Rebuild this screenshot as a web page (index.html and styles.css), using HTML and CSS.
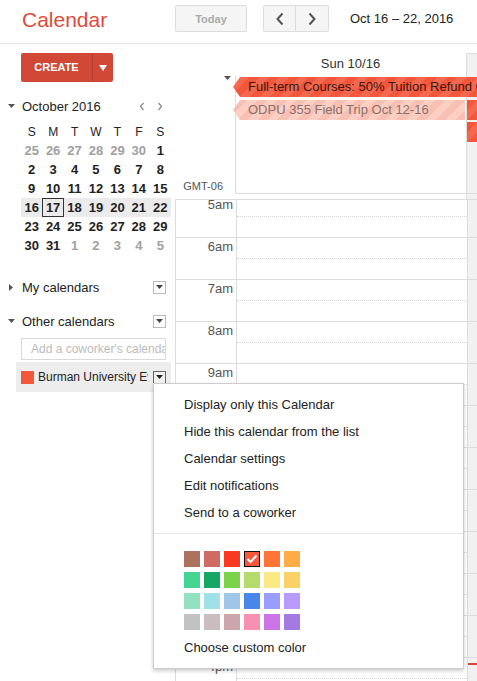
FILE: index.html
```html
<!DOCTYPE html>
<html lang="en">
<head>
    <meta charset="UTF-8">
    <title>Calendar</title>
    <link rel="stylesheet" href="styles.css">
</head>
<body>
    <header class="topbar">
        <div class="brand">Calendar</div>
        <button class="btn btn-today">Today</button>
        <div class="nav-group">
            <button class="btn btn-nav">
                <svg width="10" height="14" viewBox="0 0 10 14"><path d="M7.5 1.5 2.5 7l5 5.5" fill="none" stroke="#555" stroke-width="2"/></svg>
            </button>
            <button class="btn btn-nav">
                <svg width="10" height="14" viewBox="0 0 10 14"><path d="M2.5 1.5 7.5 7l-5 5.5" fill="none" stroke="#555" stroke-width="2"/></svg>
            </button>
        </div>
        <div class="date-range">Oct 16 &ndash; 22, 2016</div>
    </header>

    <div class="app">
        <aside class="sidebar">
            <div class="create">
                <span class="create-label">CREATE</span>
                <span class="create-arrow">
                    <svg width="8" height="6" viewBox="0 0 8 6"><path d="M0 0h8L4 6z" fill="#fff"/></svg>
                </span>
            </div>

            <div class="month-title">
                <svg class="caret" width="7" height="4" viewBox="0 0 7 4"><path d="M0 0h7L3.5 4z" fill="#555"/></svg>
                <span class="month-name">October 2016</span>
                <span class="month-nav">
                    <svg width="6" height="9" viewBox="0 0 6 9"><path d="M4.5 1 1.5 4.5l3 3.5" fill="none" stroke="#888" stroke-width="1.2"/></svg>
                    <svg width="6" height="9" viewBox="0 0 6 9"><path d="M1.5 1l3 3.5-3 3.5" fill="none" stroke="#888" stroke-width="1.2"/></svg>
                </span>
            </div>

            <table class="mini-cal">
                <thead>
                    <tr><th>S</th><th>M</th><th>T</th><th>W</th><th>T</th><th>F</th><th>S</th></tr>
                </thead>
                <tbody>
                    <tr><td class="off">25</td><td class="off">26</td><td class="off">27</td><td class="off">28</td><td class="off">29</td><td class="off">30</td><td>1</td></tr>
                    <tr><td>2</td><td>3</td><td>4</td><td>5</td><td>6</td><td>7</td><td>8</td></tr>
                    <tr><td>9</td><td>10</td><td>11</td><td>12</td><td>13</td><td>14</td><td>15</td></tr>
                    <tr class="week-current"><td>16</td><td class="today">17</td><td>18</td><td>19</td><td>20</td><td>21</td><td>22</td></tr>
                    <tr><td>23</td><td>24</td><td>25</td><td>26</td><td>27</td><td>28</td><td>29</td></tr>
                    <tr><td>30</td><td>31</td><td class="off">1</td><td class="off">2</td><td class="off">3</td><td class="off">4</td><td class="off">5</td></tr>
                </tbody>
            </table>

            <div class="cal-section">
                <svg class="caret" width="4" height="7" viewBox="0 0 4 7"><path d="M0 0l4 3.5L0 7z" fill="#555"/></svg>
                <span class="section-name">My calendars</span>
                <span class="dd"><svg width="7" height="4" viewBox="0 0 7 4"><path d="M0 0h7L3.5 4z" fill="#444"/></svg></span>
            </div>

            <div class="cal-section other">
                <svg class="caret" width="7" height="4" viewBox="0 0 7 4"><path d="M0 0h7L3.5 4z" fill="#555"/></svg>
                <span class="section-name">Other calendars</span>
                <span class="dd"><svg width="7" height="4" viewBox="0 0 7 4"><path d="M0 0h7L3.5 4z" fill="#444"/></svg></span>
            </div>

            <input class="coworker" type="text" placeholder="Add a coworker's calendar">

            <div class="cal-item">
                <span class="cal-swatch"></span>
                <span class="cal-name">Burman University Events</span>
                <span class="dd dd-active"><svg width="7" height="4" viewBox="0 0 7 4"><path d="M0 0h7L3.5 4z" fill="#222"/></svg></span>
            </div>
        </aside>

        <main class="week">
            <div class="dayhead">
                <div class="dayhead-label">Sun 10/16</div>
                <div class="today-col dayhead-today"></div>
            </div>

            <div class="allday">
                <div class="allday-gutter">
                    <svg class="allday-caret" width="7" height="4" viewBox="0 0 7 4"><path d="M0 0h7L3.5 4z" fill="#555"/></svg>
                    <span class="tz">GMT-06</span>
                </div>
                <div class="allday-day"></div>
                <div class="today-col allday-today"></div>
                <div class="event event-main">Full-term Courses: 50% Tuition Refund Oct 14-20</div>
                <div class="event event-trip">ODPU 355 Field Trip Oct 12-16</div>
                <div class="event-block row2"></div>
                <div class="event-block row3"></div>
            </div>

            <div class="allday-gap">
                <div></div><div></div><div class="today-col"></div>
            </div>

            <div class="timegrid">
                <div class="hours">
                    <div class="hour"><div class="hour-label">5am</div><div class="hour-day"></div><div class="today-col"></div></div>
                    <div class="hour"><div class="hour-label">6am</div><div class="hour-day"></div><div class="today-col"></div></div>
                    <div class="hour"><div class="hour-label">7am</div><div class="hour-day"></div><div class="today-col"></div></div>
                    <div class="hour"><div class="hour-label">8am</div><div class="hour-day"></div><div class="today-col"></div></div>
                    <div class="hour"><div class="hour-label">9am</div><div class="hour-day"></div><div class="today-col"></div></div>
                    <div class="hour"><div class="hour-label">10am</div><div class="hour-day"></div><div class="today-col"></div></div>
                    <div class="hour"><div class="hour-label">11am</div><div class="hour-day"></div><div class="today-col"></div></div>
                    <div class="hour"><div class="hour-label">12pm</div><div class="hour-day"></div><div class="today-col"></div></div>
                    <div class="hour"><div class="hour-label">1pm</div><div class="hour-day"></div><div class="today-col"></div></div>
                    <div class="hour"><div class="hour-label">2pm</div><div class="hour-day"></div><div class="today-col"></div></div>
                    <div class="hour"><div class="hour-label">3pm</div><div class="hour-day"></div><div class="today-col"></div></div>
                    <div class="hour"><div class="hour-label">4pm</div><div class="hour-day"></div><div class="today-col now"><span class="now-line"></span></div></div>
                    <div class="hour"><div class="hour-label">5pm</div><div class="hour-day"></div><div class="today-col"></div></div>
                </div>
            </div>
        </main>
    </div>

    <!-- calendar options menu -->
    <div class="menu">
        <div class="menu-item">Display only this Calendar</div>
        <div class="menu-item">Hide this calendar from the list</div>
        <div class="menu-item">Calendar settings</div>
        <div class="menu-item">Edit notifications</div>
        <div class="menu-item">Send to a coworker</div>
        <div class="menu-sep"></div>
        <div class="swatches">
            <span class="sw" style="background:#ac725e"></span>
            <span class="sw" style="background:#d06b64"></span>
            <span class="sw" style="background:#f83a22"></span>
            <span class="sw sw-selected" style="background:#fa573c">
                <svg width="12" height="10" viewBox="0 0 12 10"><path d="M1.5 5 4.5 8l6-6.5" fill="none" stroke="#fff" stroke-width="2"/></svg>
            </span>
            <span class="sw" style="background:#ff7537"></span>
            <span class="sw" style="background:#ffad46"></span>
            <span class="sw" style="background:#42d692"></span>
            <span class="sw" style="background:#16a765"></span>
            <span class="sw" style="background:#7bd148"></span>
            <span class="sw" style="background:#b3dc6c"></span>
            <span class="sw" style="background:#fbe983"></span>
            <span class="sw" style="background:#fad165"></span>
            <span class="sw" style="background:#92e1c0"></span>
            <span class="sw" style="background:#9fe1e7"></span>
            <span class="sw" style="background:#9fc6e7"></span>
            <span class="sw" style="background:#4986e7"></span>
            <span class="sw" style="background:#9a9cff"></span>
            <span class="sw" style="background:#b99aff"></span>
            <span class="sw" style="background:#c2c2c2"></span>
            <span class="sw" style="background:#cabdbf"></span>
            <span class="sw" style="background:#cca6ac"></span>
            <span class="sw" style="background:#f691b2"></span>
            <span class="sw" style="background:#cd74e6"></span>
            <span class="sw" style="background:#a47ae2"></span>
        </div>
        <div class="menu-item">Choose custom color</div>
    </div>
</body>
</html>
```

FILE: styles.css
```css
body {
    margin: 0;
    width: 477px;
    height: 681px;
    overflow: hidden;
    position: relative;
    font-family: "Liberation Sans", Arial, sans-serif;
    font-size: 13px;
    color: #222;
    background: #fff;
}

/* top bar */
.topbar {
    display: flex;
    align-items: flex-start;
    height: 44px;
    padding: 5px 0 0 22px;
    box-sizing: border-box;
    border-bottom: 1px solid #e5e5e5;
}

.brand {
    width: 153px;
    font-size: 21px;
    line-height: 29px;
    color: #dd4b39;
}

.btn {
    height: 27px;
    margin: 0;
    padding: 0;
    background: #f5f5f5;
    border: 1px solid #dcdcdc;
    border-radius: 2px;
    font-family: inherit;
    display: flex;
    align-items: center;
    justify-content: center;
}

.btn-today {
    width: 72px;
    font-size: 11px;
    font-weight: bold;
    color: #aaa;
}

.nav-group {
    display: flex;
    margin-left: 16px;
}

.btn-nav {
    width: 33px;
}

.btn-nav:first-child {
    border-radius: 2px 0 0 2px;
}

.btn-nav:last-child {
    border-left: 0;
    border-radius: 0 2px 2px 0;
}

.date-range {
    margin-left: 21px;
    line-height: 27px;
    font-size: 13px;
    color: #222;
}

/* layout */
.app {
    display: flex;
}

.sidebar {
    width: 175px;
    flex-shrink: 0;
}

/* create button */
.create {
    display: flex;
    width: 92px;
    height: 29px;
    margin: 9px 0 0 21px;
    background: #d14836;
    border-radius: 2px;
    color: #fff;
}

.create-label {
    width: 71px;
    line-height: 29px;
    text-align: center;
    font-size: 11px;
    font-weight: bold;
    border-right: 1px solid rgba(0, 0, 0, 0.15);
}

.create-arrow {
    flex: 1;
    display: flex;
    align-items: center;
    justify-content: center;
}

/* mini calendar */
.month-title {
    display: flex;
    align-items: center;
    height: 18px;
    margin-top: 15px;
    padding-left: 8px;
}

.caret {
    flex-shrink: 0;
}

.month-name {
    margin-left: 7px;
    font-size: 13px;
}

.month-nav {
    display: flex;
    gap: 12px;
    margin-left: auto;
    margin-right: 12px;
}

.mini-cal {
    width: 150px;
    margin: 7px 0 0 21px;
    border-collapse: collapse;
    table-layout: fixed;
}

.mini-cal th,
.mini-cal td {
    height: 19px;
    padding: 0;
    text-align: center;
    font-size: 13px;
}

.mini-cal th {
    font-weight: normal;
    font-size: 12px;
}

.mini-cal td {
    font-weight: bold;
    color: #222;
}

.mini-cal td.off {
    color: #a0a0a0;
}

.week-current td {
    background: #ebebeb;
}

.mini-cal td.today {
    box-shadow: inset 0 0 0 1px #333;
}

/* calendar lists */
.cal-section {
    display: flex;
    align-items: center;
    height: 26px;
    margin-top: 19px;
    padding: 0 9px 0 9px;
}

.cal-section .section-name {
    margin-left: 9px;
    font-size: 13px;
}

.cal-section.other {
    margin-top: 8px;
    padding-left: 8px;
}

.cal-section.other .section-name {
    margin-left: 7px;
}

.dd {
    display: flex;
    align-items: center;
    justify-content: center;
    width: 13px;
    height: 13px;
    margin-left: auto;
    box-sizing: border-box;
    border: 1px solid #bbb;
    background: #fff;
}

.coworker {
    display: block;
    width: 145px;
    height: 22px;
    margin: 4px 0 0 21px;
    padding: 0 0 0 9px;
    box-sizing: border-box;
    border: 1px solid #d9d9d9;
    font-family: inherit;
    font-size: 12px;
}

.coworker::placeholder {
    color: #bbb;
}

.cal-item {
    display: flex;
    align-items: center;
    height: 30px;
    margin: 2px 4px 0 16px;
    padding: 0 5px;
    background: #ededed;
}

.cal-swatch {
    width: 13px;
    height: 13px;
    flex-shrink: 0;
    background: #f4583b;
}

.cal-name {
    width: 110px;
    margin-left: 4px;
    overflow: hidden;
    white-space: nowrap;
    font-size: 12px;
}

.dd-active {
    border-color: #666;
    background: #f1f1f1;
}

/* week view */
.week {
    width: 302px;
    flex-shrink: 0;
}

.dayhead,
.allday,
.allday-gap,
.hour {
    display: grid;
    grid-template-columns: 60px 231px 1fr;
}

.today-col {
    background: #f1f1f1;
    border-left: 1px solid #dcdcdc;
}

.dayhead {
    height: 32px;
}

.dayhead-label {
    grid-column: 2;
    padding-top: 12px;
    line-height: 15px;
    text-align: center;
    color: #333;
}

.dayhead-today {
    grid-column: 3;
    margin-top: 9px;
    border-top: 1px solid #dcdcdc;
}

.allday {
    height: 118px;
    grid-template-rows: 23px 22px 22px 1fr;
}

.allday-gutter {
    grid-column: 1;
    grid-row: 1 / -1;
    display: flex;
    flex-direction: column;
    justify-content: space-between;
    align-items: flex-end;
}

.allday-caret {
    margin-right: 4px;
}

.tz {
    padding-right: 12px;
    line-height: 15px;
    font-size: 11px;
    color: #555;
}

.allday-day {
    grid-column: 2;
    grid-row: 1 / -1;
    border-left: 1px solid #dcdcdc;
    border-bottom: 1px solid #dcdcdc;
}

.allday-today {
    grid-column: 3;
    grid-row: 1 / -1;
    border-bottom: 1px solid #dcdcdc;
}

.event {
    height: 20px;
    margin: 1px 0 0 -2px;
    padding-left: 15px;
    line-height: 20px;
    white-space: nowrap;
    overflow: hidden;
    clip-path: polygon(7px 0, 100% 0, 100% 100%, 7px 100%, 0 50%);
}

.event-main {
    grid-column: 2 / 4;
    grid-row: 1;
    color: #3d1710;
    background: repeating-linear-gradient(-45deg, #f2563b 0 7px, #f4684f 7px 14px);
}

.event-trip {
    grid-column: 2;
    grid-row: 2;
    margin-right: 1px;
    color: #8a716c;
    background: repeating-linear-gradient(-45deg, #f8c0b3 0 7px, #fbcfc4 7px 14px);
}

.event-block {
    grid-column: 3;
    height: 20px;
    margin: 1px 0 0 1px;
    background: repeating-linear-gradient(-45deg, #f2563b 0 7px, #f4684f 7px 14px);
}

.event-block.row2 {
    grid-row: 2;
}

.event-block.row3 {
    grid-row: 3;
}

.allday-gap {
    height: 5px;
}

.timegrid {
    height: 482px;
    overflow: hidden;
    border-top: 1px solid #dcdcdc;
    border-left: 1px solid #dcdcdc;
}

.hours {
    margin-top: -5px;
}

.hour {
    height: 42px;
    box-sizing: border-box;
    border-top: 1px solid #dcdcdc;
}

.hour-label {
    padding: 1px 3px 0 0;
    line-height: 15px;
    text-align: right;
    color: #555;
}

.hour-day {
    position: relative;
    border-left: 1px solid #dcdcdc;
}

.hour-day::before {
    content: "";
    position: absolute;
    left: 0;
    right: 0;
    top: 20px;
    border-top: 1px dotted #d6d6d6;
}

.now {
    position: relative;
}

.now-line {
    position: absolute;
    left: 0;
    right: 0;
    top: 5px;
    height: 2px;
    background: #db4437;
}

/* popup menu */
.menu {
    position: absolute;
    left: 153px;
    top: 383px;
    width: 311px;
    height: 286px;
    box-sizing: border-box;
    padding-top: 7px;
    background: #fff;
    border: 1px solid rgba(0, 0, 0, 0.2);
    box-shadow: 0 2px 4px rgba(0, 0, 0, 0.2);
}

.menu-item {
    height: 27px;
    line-height: 27px;
    padding-left: 30px;
    font-size: 13px;
    color: #222;
}

.menu-sep {
    margin-top: 7px;
    border-top: 1px solid #e5e5e5;
}

.swatches {
    display: grid;
    grid-template-columns: repeat(6, 16px);
    gap: 5px 4px;
    margin: 17px 0 4px 30px;
}

.sw {
    width: 16px;
    height: 16px;
    display: flex;
    align-items: center;
    justify-content: center;
}

.sw-selected {
    box-sizing: border-box;
    border: 1px solid #111;
}
```
